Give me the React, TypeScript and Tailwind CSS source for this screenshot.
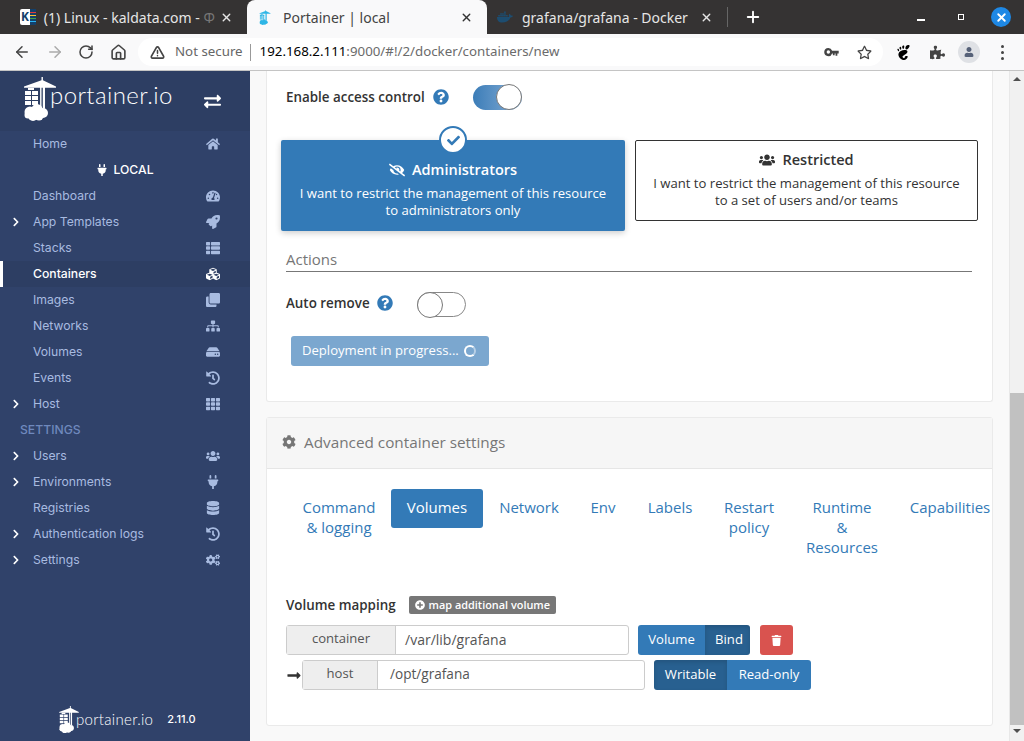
import React from 'react';
import {
  FaHome, FaPlug, FaTachometerAlt, FaRocket, FaThList, FaCubes, FaClone, FaSitemap, FaHdd, FaHistory, FaTh,
  FaUsers, FaDatabase, FaCogs, FaExchangeAlt, FaQuestionCircle, FaEyeSlash, FaCheck, FaCog, FaPlusCircle,
  FaTrash, FaLongArrowAltRight, FaDocker, FaRegStar, FaPuzzlePiece, FaUser, FaChevronRight,
} from 'react-icons/fa';
import { SiGnome } from 'react-icons/si';
import { ArrowLeft, ArrowRight, RotateCw, Home, X, Plus, TriangleAlert } from 'lucide-react';

const Logo = ({ className, color = '#fff' }: { className: string; color?: string }) => (
  <svg viewBox="0 0 32 44" className={className} fill={color}>
    {/* crane */}
    <path d="M17.5 0h1.4v3.2L32 9.6v1.2H21v21h-2.2V10.8h-1.3v21h-1.4V10.8H0V9.6l17.5-6.4z" />
    {/* containers */}
    <path d="M1 14h6v4H1zM8 14h6v4H8zM1 19h6v4H1zM8 19h6v4H8zM1 24h6v4H1zM8 24h6v4H8zM4 11h6v2H4z" />
    {/* cloud */}
    <circle cx="6" cy="35" r="5.5" />
    <circle cx="13" cy="32.5" r="5.5" />
    <circle cx="19" cy="36" r="5" />
    <circle cx="9" cy="39" r="5" />
    <circle cx="4" cy="38" r="3.5" />
    <circle cx="15" cy="39" r="4.5" />
  </svg>
);

const KeyIcon = () => (
  <svg viewBox="0 0 16 10" className="ml-auto h-[9px] w-[15px] fill-[#444]">
    <path d="M4.5 0a4.5 4.5 0 0 1 4.2 3H16v3h-1.5v2.500h-2V6h-1v2h-2V6h-.8A4.500 4.500 0 1 1 4.500 0zm0 2.600a1.900 1.900 0 1 0 0 3.800 1.900 1.900 0 0 0 0-3.800z" />
  </svg>
);

const navItems = [
  { label: 'Home', icon: FaHome },
  { label: 'LOCAL', icon: FaPlug, kind: 'env' },
  { label: 'Dashboard', icon: FaTachometerAlt },
  { label: 'App Templates', icon: FaRocket, arrow: true },
  { label: 'Stacks', icon: FaThList },
  { label: 'Containers', icon: FaCubes, active: true },
  { label: 'Images', icon: FaClone },
  { label: 'Networks', icon: FaSitemap },
  { label: 'Volumes', icon: FaHdd },
  { label: 'Events', icon: FaHistory },
  { label: 'Host', icon: FaTh, arrow: true },
  { label: 'SETTINGS', kind: 'title' },
  { label: 'Users', icon: FaUsers, arrow: true },
  { label: 'Environments', icon: FaPlug, arrow: true },
  { label: 'Registries', icon: FaDatabase },
  { label: 'Authentication logs', icon: FaHistory, arrow: true },
  { label: 'Settings', icon: FaCogs, arrow: true },
];

const tabs = [
  { lines: ['Command', '& logging'], width: 'w-[104px]' },
  { lines: ['Volumes'], width: 'w-[92px]', active: true },
  { lines: ['Network'], width: 'w-[92px]' },
  { lines: ['Env'], width: 'w-[56px]' },
  { lines: ['Labels'], width: 'w-[78px]' },
  { lines: ['Restart', 'policy'], width: 'w-[80px]' },
  { lines: ['Runtime', '&', 'Resources'], width: 'w-[106px]' },
  { lines: ['Capabilities'], width: 'w-[110px]' },
];

const Toggle = ({ on }: { on: boolean }) => (
  <div className={`relative h-[25px] w-[49px] rounded-full ${on ? 'bg-gradient-to-r from-[#3b7db8] to-[#85aed5]' : 'border border-[#888] bg-white'}`}>
    <div className={`absolute h-[26px] w-[26px] rounded-full border border-[#777] bg-white ${on ? 'right-0 top-[-1px]' : 'left-[-1px] top-[-1px]'}`} />
  </div>
);

const App = () => {
  return (
    <div className="flex h-[741px] w-[1024px] flex-col overflow-hidden bg-white font-['Inter',sans-serif] text-[12.2px]">
      {/* Browser tabs */}
      <div className="flex h-[34px] items-center bg-[#353333] pl-[8px] font-['Noto_Sans',sans-serif] text-[14px] text-[#e6e6e6]">
        <div className="flex h-full w-[239px] items-center pl-[12px] pr-[14px]">
          <div className="relative flex h-[16px] w-[16px] items-center rounded-[2px] bg-white pl-[1px] text-[12px] font-bold leading-none text-[#14406b]">
            K
            <div className="absolute right-0 top-0 flex h-full w-[6px] flex-col justify-around bg-[#14406b] py-[2px]">
              <div className="h-[1px] bg-[#e53935]" />
              <div className="h-[1px] bg-[#fbc02d]" />
              <div className="h-[1px] bg-[#43a047]" />
              <div className="h-[1px] bg-[#29b6f6]" />
            </div>
          </div>
          <span className="ml-[8px] w-[175px] whitespace-nowrap">(1) Linux - kaldata.com - <span className="text-[#777]">Ф</span></span>
          <X size={13} strokeWidth={2.5} className="ml-[4px] shrink-0" />
        </div>
        <div className="flex h-full w-[240px] items-center rounded-t-[8px] bg-[#f9f9fa] pl-[12px] pr-[14px] text-[#444]">
          <Logo className="h-[15px] w-[12px] shrink-0" color="#2fb6e6" />
          <span className="ml-[12px] flex-1">Portainer | local</span>
          <X size={13} strokeWidth={2.5} className="text-[#333]" />
        </div>
        <div className="flex h-full w-[240px] items-center pl-[10px] pr-[14px]">
          <FaDocker size={16} className="shrink-0 text-[#1d4d70]" />
          <span className="ml-[9px] w-[172px] whitespace-nowrap">grafana/grafana - Docker</span>
          <X size={13} strokeWidth={2.5} className="ml-[8px] shrink-0" />
        </div>
        <div className="h-[20px] w-px bg-[#666]" />
        <Plus size={18} strokeWidth={2.5} className="ml-[16px] text-white" />
        <div className="ml-auto flex items-center pr-[13px]">
          <div className="mt-[6px] h-[2px] w-[8px] bg-white" />
          <div className="ml-[33px] h-[6px] w-[6px] border border-white" />
          <div className="ml-[27px] flex h-[20px] w-[20px] items-center justify-center rounded-full bg-[#1e88e5]">
            <X size={13} strokeWidth={3.5} className="text-white" />
          </div>
        </div>
      </div>

      {/* Browser toolbar */}
      <div className="flex h-[37px] items-center border-b border-[#c4c4c4] bg-[#f9f9fa] font-['Noto_Sans',sans-serif] text-[13.3px]">
        <ArrowLeft size={18} strokeWidth={2} className="ml-[13px] text-[#444]" />
        <ArrowRight size={18} strokeWidth={2} className="ml-[15px] text-[#aaa]" />
        <RotateCw size={16} strokeWidth={2.3} className="ml-[14px] text-[#444]" />
        <Home size={17} strokeWidth={2.3} className="ml-[16px] text-[#444]" />
        <div className="ml-[11px] flex h-[28px] w-[745px] shrink-0 items-center rounded-full bg-white pl-[12px] pr-[11px]">
          <TriangleAlert size={15} strokeWidth={2.5} className="text-[#444]" />
          <span className="ml-[10px] text-[#666]">Not secure</span>
          <div className="ml-[7px] mr-[9px] h-[17px] w-px bg-[#999]" />
          <span className="text-black">192.168.2.111</span>
          <span className="text-[#6b6b6b]">:9000/#!/2/docker/containers/new</span>
          <KeyIcon />
          <FaRegStar size={15} className="ml-[18px] text-[#444]" />
        </div>
        <SiGnome size={15} className="ml-[13px] text-black" />
        <FaPuzzlePiece size={15} className="ml-[19px] text-[#444]" />
        <div className="ml-[13px] flex h-[22px] w-[22px] items-center justify-center rounded-full bg-[#dfe1e5]">
          <FaUser size={10} className="text-[#566178]" />
        </div>
        <div className="ml-[21px] flex flex-col gap-[3px]">
          <div className="h-[3px] w-[3px] rounded-full bg-[#444]" />
          <div className="h-[3px] w-[3px] rounded-full bg-[#444]" />
          <div className="h-[3px] w-[3px] rounded-full bg-[#444]" />
        </div>
      </div>

      <div className="flex min-h-0 flex-1">
        {/* Sidebar */}
        <aside className="flex w-[250px] shrink-0 flex-col bg-[#30426a]">
          <div className="flex h-[60px] shrink-0 items-start bg-[#2d3e63] pl-[24px] pt-[6px]">
            <Logo className="h-[44px] w-[32px] shrink-0" />
            <span className="ml-[-6px] mt-[3px] font-['Lato',sans-serif] text-[24px] font-light leading-[30px] tracking-[0.4px] text-white">portainer.io</span>
            <FaExchangeAlt size={17} className="ml-[31px] mt-[16px] text-white" />
          </div>
          <nav>
            {navItems.map((item) => {
              if (item.kind === 'title') {
                return (
                  <div key={item.label} className="flex h-[26px] items-center pl-[20px] font-medium text-[#6f89bd]">
                    {item.label}
                  </div>
                );
              }
              const Icon = item.icon!;
              if (item.kind === 'env') {
                return (
                  <div key={item.label} className="flex h-[26px] items-center justify-center font-medium text-white">
                    <Icon size={12} className="mr-[5px]" />
                    {item.label}
                  </div>
                );
              }
              return (
                <div
                  key={item.label}
                  className={`relative flex h-[26px] items-center pl-[33px] ${
                    item.active ? 'bg-[#2d3e63] font-medium text-white' : 'text-[#a8bbe0]'
                  }`}
                >
                  {item.active && <div className="absolute left-0 top-0 h-full w-[3px] bg-white" />}
                  {item.arrow && <FaChevronRight size={10} className="absolute left-[11px] text-white" />}
                  {item.label}
                  <Icon size={14} className="absolute left-[206px]" />
                </div>
              );
            })}
          </nav>
          <div className="mt-auto flex h-[35px] items-start pl-[59px]">
            <Logo className="h-[27px] w-[20px] shrink-0" />
            <span className="ml-[-3px] mt-[3px] font-['Lato',sans-serif] text-[15px] font-light leading-[20px] tracking-[0.3px] text-white">portainer.io</span>
            <span className="ml-[14px] mt-[3px] text-[11px] font-medium leading-[20px] text-white">2.11.0</span>
          </div>
        </aside>

        {/* Main */}
        <main className="flex min-w-0 flex-1 flex-col gap-[15px] bg-[#f9f9f9] px-[16px] font-['Open_Sans',sans-serif] text-[13.1px] text-[#333]">
          {/* Form card */}
          <section className="h-[331px] shrink-0 rounded-b-[3px] border border-t-0 border-[#eaeaea] bg-white pl-[19px] pr-[20px]">
            <div className="flex h-[53px] items-center">
              <span className="w-[147px] text-[13.4px] font-semibold text-[#333]">Enable access control</span>
              <FaQuestionCircle size={16} className="mb-[2px] text-[#337ab7]" />
              <div className="ml-[24px]"><Toggle on /></div>
            </div>
            <div className="ml-[-5px] mt-[16px] flex items-start gap-[10px]">
              <div className="relative flex h-[91px] w-[344px] shrink-0 flex-col items-center rounded-[2px] bg-[#337ab7] pt-[19px] text-white shadow-[0_2px_6px_rgba(0,0,0,0.2)]">
                <div className="absolute top-[-14px] flex h-[28px] w-[28px] items-center justify-center rounded-full border-[2px] border-[#337ab7] bg-white">
                  <FaCheck size={13} className="text-[#337ab7]" />
                </div>
                <div className="flex items-center text-[14.5px] font-semibold leading-[22px]">
                  <FaEyeSlash size={16} className="mr-[7px]" />
                  Administrators
                </div>
                <div className="mt-[4px] text-center leading-[17px]">
                  I want to restrict the management of this resource<br />to administrators only
                </div>
              </div>
              <div className="flex h-[81px] w-[343px] shrink-0 flex-col items-center rounded-[2px] border border-[#333] bg-white pt-[8px] text-[#333]">
                <div className="flex items-center text-[14.5px] font-semibold leading-[22px]">
                  <FaUsers size={16} className="mr-[7px]" />
                  Restricted
                </div>
                <div className="mt-[4px] text-center leading-[17px]">
                  I want to restrict the management of this resource<br />to a set of users and/or teams
                </div>
              </div>
            </div>
            <div className="mt-[19px] border-b border-[#777] pb-[2px] text-[15px] leading-[19px] text-[#767676]">Actions</div>
            <div className="mt-[19px] flex h-[26px] items-center">
              <span className="mb-[2px] w-[91px] text-[13.4px] font-semibold text-[#333]">Auto remove</span>
              <FaQuestionCircle size={16} className="mb-[2px] text-[#337ab7]" />
              <div className="ml-[24px]"><Toggle on={false} /></div>
            </div>
            <div className="ml-[5px] mt-[19px] flex h-[30px] w-[198px] items-center rounded-[3px] bg-[#7ba7cf] pl-[11px] text-white">
              Deployment in progress...
              <div className="ml-[5px] h-[12px] w-[12px] rounded-full border-[2px] border-white border-r-[#b8d0e6]" />
            </div>
          </section>

          {/* Advanced settings card */}
          <section className="min-h-0 flex-1 rounded-[3px] border border-[#eaeaea] bg-white">
            <div className="flex h-[51px] items-center border-b border-[#e6e6e6] bg-[#f6f6f6] pb-[2px] pl-[15px] text-[15.3px] text-[#767676]">
              <FaCog size={14} className="mr-[8px]" />
              Advanced container settings
            </div>
            <div className="ml-[20px] mt-[20px] flex items-start text-[15px] leading-[20px] text-[#337ab7]">
              {tabs.map((tab) => (
                <div
                  key={tab.lines[0]}
                  className={`shrink-0 pb-[11px] pt-[8px] text-center font-medium ${tab.width} ${tab.active ? 'rounded-[3px] bg-[#337ab7] text-white' : ''}`}
                >
                  {tab.lines.map((line) => (
                    <div key={line}>{line}</div>
                  ))}
                </div>
              ))}
            </div>
            <div className="ml-[19px] mt-[27px]">
              <div className="flex h-[20px] items-center">
                <span className="text-[13.4px] font-semibold text-[#333]">Volume mapping</span>
                <div className="ml-[13px] flex h-[18px] items-center rounded-[2px] bg-[#777] px-[6px] text-[10.9px] font-semibold text-white">
                  <FaPlusCircle size={10} className="mr-[4px]" />
                  map additional volume
                </div>
              </div>
              <div className="mt-[10px] flex items-center">
                <div className="flex h-[30px] w-[343px] rounded-[3px] border border-[#ccc]">
                  <div className="flex w-[109px] items-center justify-center border-r border-[#ccc] bg-[#eee] pb-[2px] text-[#555]">container</div>
                  <div className="flex flex-1 items-center pb-[2px] pl-[9px] text-[14px] text-[#555]">/var/lib/grafana</div>
                </div>
                <div className="ml-[9px] flex h-[30px] text-white">
                  <div className="flex w-[67px] items-center justify-center rounded-l-[3px] bg-[#337ab7]">Volume</div>
                  <div className="flex w-[45px] items-center justify-center rounded-r-[3px] bg-[#286090] pl-[3px] shadow-[inset_0_2px_4px_rgba(0,0,0,0.13)]">Bind</div>
                </div>
                <div className="ml-[10px] flex h-[30px] w-[33px] items-center justify-center rounded-[3px] bg-[#d9534f] text-white">
                  <FaTrash size={11} />
                </div>
              </div>
              <div className="mt-[5px] flex items-center">
                <FaLongArrowAltRight size={15} className="w-[16px] text-[#333]" />
                <div className="flex h-[30px] w-[343px] rounded-[3px] border border-[#ccc]">
                  <div className="flex w-[75px] items-center justify-center border-r border-[#ccc] bg-[#eee] pb-[2px] text-[#555]">host</div>
                  <div className="flex flex-1 items-center pb-[2px] pl-[12px] text-[13.6px] text-[#555]">/opt/grafana</div>
                </div>
                <div className="ml-[9px] flex h-[30px] text-white">
                  <div className="flex w-[73px] items-center justify-center rounded-l-[3px] bg-[#286090] shadow-[inset_0_2px_4px_rgba(0,0,0,0.13)]">Writable</div>
                  <div className="flex w-[84px] items-center justify-center rounded-r-[3px] bg-[#337ab7]">Read-only</div>
                </div>
              </div>
            </div>
          </section>
          <div className="h-[0px]" />
        </main>

        {/* Page scrollbar */}
        <div className="flex w-[15px] shrink-0 flex-col items-center border-l border-[#e8e8e8] bg-[#f1f1f1]">
          <div className="mt-[6px] h-0 w-0 border-x-[4px] border-b-[4px] border-x-transparent border-b-[#505050]" />
          <div className="mt-[312px] h-[332px] w-full bg-[#c1c1c1]" />
          <div className="mt-[4px] h-0 w-0 border-x-[4px] border-t-[4px] border-x-transparent border-t-[#505050]" />
        </div>
      </div>
    </div>
  );
};

export default App;
